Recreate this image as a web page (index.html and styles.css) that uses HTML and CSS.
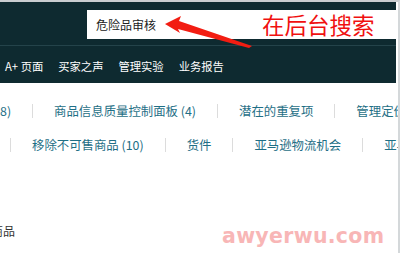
FILE: index.html
```html
<!DOCTYPE html>
<html lang="zh">
<head>
<meta charset="utf-8">
<link rel="stylesheet" href="styles.css">
</head>
<body>
<div class="page">
  <header class="header">
    <div class="topbar">
      <div class="search">
        <span class="query">危险品审核</span>
        <span class="note">在后台搜索</span>
      </div>
    </div>
    <nav class="nav">
      <span>A+ 页面</span>
      <span>买家之声</span>
      <span>管理实验</span>
      <span>业务报告</span>
    </nav>
  </header>
  <main class="content">
    <div class="links row1">
      <span class="link">8)</span>
      <span class="link">商品信息质量控制面板 (4)</span>
      <span class="link">潜在的重复项</span>
      <span class="link">管理定价</span>
    </div>
    <div class="links row2">
      <span class="link first"></span>
      <span class="link">移除不可售商品 (10)</span>
      <span class="link">货件</span>
      <span class="link">亚马逊物流机会</span>
      <span class="link">亚马</span>
    </div>
    <div class="label">商品</div>
  </main>
  <svg class="arrow" width="400" height="253" viewBox="0 0 400 253">
    <polygon points="165,24 181,16 179,21 252,46 249,48 178,29 180,33" fill="#f21d12"/>
  </svg>
  <div class="watermark">awyerwu.com</div>
</div>
</body>
</html>
```
FILE: styles.css
```css
html, body {
  margin: 0;
  padding: 0;
  background: #ffffff;
}
.page {
  position: relative;
  width: 400px;
  height: 253px;
  overflow: hidden;
  font-family: "Noto Sans CJK SC", "Liberation Sans", sans-serif;
  background: #ffffff;
  border-top: 2px solid #c9cdd0;
  border-right: 2px solid #d4d8da;
  box-sizing: border-box;
}
.header {
  background: #0e2a30;
  margin-right: 2px;
}
.topbar {
  height: 44px;
  padding-top: 8px;
  box-sizing: border-box;
  border-bottom: 1px solid #24434a;
}
.search {
  margin-left: 87px;
  height: 29px;
  background: #ffffff;
  display: flex;
  align-items: center;
}
.query {
  margin-left: 9px;
  font-size: 12px;
  color: #222;
}
.note {
  margin-left: 106px;
  font-size: 22.5px;
  color: #f01010;
  line-height: 1;
}
.nav {
  height: 37px;
  display: flex;
  align-items: center;
  gap: 15px;
  padding-left: 5px;
  padding-top: 3px;
  color: #ffffff;
  font-size: 11.3px;
  box-sizing: border-box;
}
.content {
  margin-right: 2px;
}
.links {
  display: flex;
  align-items: center;
  white-space: nowrap;
  font-size: 12.4px;
  color: #1f6f86;
}
.row1 {
  margin-top: 21px;
}
.row2 {
  margin-top: 20px;
  margin-left: -10px;
}
.link {
  padding: 0 21px;
  border-left: 1px solid #dcdcdc;
  line-height: 14px;
  height: 14px;
  display: flex;
  align-items: center;
}
.row1 .link:first-child {
  border-left: none;
  padding-left: 0;
}
.row2 .link.first {
  border-left: none;
  padding: 0 0 0 20px;
}
.label {
  margin-top: 70px;
  margin-left: -9px;
  font-size: 12px;
  color: #333;
}
.arrow {
  position: absolute;
  left: 0;
  top: -2px;
}
.watermark {
  position: absolute;
  left: 222px;
  top: 222px;
  font-family: "DejaVu Sans", sans-serif;
  font-weight: bold;
  font-size: 20.5px;
  letter-spacing: 0.3px;
  color: #f8b6b6;
}
```
